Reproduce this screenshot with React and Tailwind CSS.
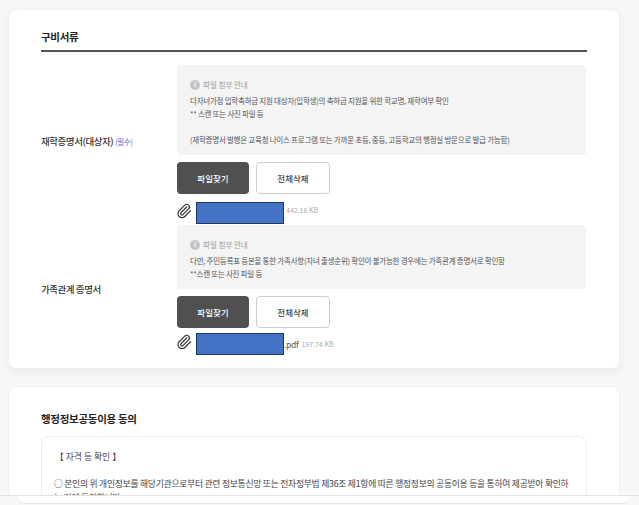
import { Paperclip } from 'lucide-react'

const font = { fontFamily: '"Noto Sans CJK KR", "Noto Sans", sans-serif' }

function Notice({ lines, className }) {
  return (
    <div className={`rounded-[4px] bg-[#f4f4f4] pl-[13px] pt-[13px] ${className}`}>
      <div className="flex h-[13px] items-center gap-[3px] text-[7.5px] text-[#9a9a9a]">
        <span className="flex h-[10px] w-[10px] items-center justify-center rounded-full bg-[#c4c4c4] text-[7px] font-bold leading-none text-[#f4f4f4]">i</span>
        파일 첨부 안내
      </div>
      <div className="mt-[3px] text-[7.5px] leading-[13px] tracking-[-0.25px] text-[#555]">
        {lines.map((line, i) => (
          <p key={i} className="h-[13px] whitespace-nowrap">{line}</p>
        ))}
      </div>
    </div>
  )
}

function Buttons() {
  return (
    <div className="mt-[7px] flex gap-[7px]">
      <button className="h-[32px] w-[72px] rounded-[4px] bg-[#505050] text-[8.5px] font-medium text-white">파일찾기</button>
      <button className="h-[32px] w-[74px] rounded-[4px] border border-[#ccc] bg-white text-[8.5px] font-medium text-[#444]">전체삭제</button>
    </div>
  )
}

function FileRow({ ext, size, className, sizeClass }) {
  return (
    <div className={`flex h-[22px] items-center ${className}`}>
      <Paperclip size={16} strokeWidth={1.9} className="-mt-[5px] -ml-[1px] shrink-0 text-[#3a3a3a]" />
      <span className="ml-[4px] h-[22px] w-[88px] border border-[#1f3864] bg-[#4472c4]" />
      {ext && <span className="text-[8.5px] tracking-[-0.3px] text-[#555]">{ext}</span>}
      <span className={`text-[7px] text-[#aaa] ${ext ? 'ml-[3px]' : 'ml-[2px]'} ${sizeClass}`}>{size}</span>
    </div>
  )
}

function DocRow({ label, required, labelClass, children }) {
  return (
    <div className="flex items-center">
      <div className={`w-[136px] shrink-0 text-[9.5px] font-medium tracking-[-0.45px] text-[#333] ${labelClass}`}>
        {label}
        {required && <span className="ml-[2px] text-[7.5px] font-normal text-[#5b6fd6]">(필수)</span>}
      </div>
      <div className="w-[409px]">{children}</div>
    </div>
  )
}

export default function App() {
  return (
    <div style={font} className="relative h-[505px] w-[639px] overflow-hidden bg-[#f7f7f7]">
      <div className="ml-2 w-[612px] pt-[9px]">
        <section className="h-[360px] rounded-[8px] border border-[#f0f0f0] bg-white px-[32px] pt-[18px] shadow-[0_3px_8px_rgba(0,0,0,0.06)]">
          <h2 className="h-[24px] border-b-2 border-[#555] pb-[4px] text-[10.5px] font-bold leading-[17px] tracking-[-0.3px] text-[#222]">구비서류</h2>
          <div className="mt-[13px]">
            <DocRow label="재학증명서(대상자)" required labelClass="pb-[6px]">
              <Notice
                className="h-[90px]"
                lines={[
                  '다자녀가정 입학축하금 지원 대상자(입학생)의 축하금 지원을 위한 학교명, 재학여부 확인',
                  '** 스캔 또는 사진 파일 등',
                  '',
                  '(재학증명서 발행은 교육청 나이스 프로그램 또는 가까운 초등, 중등, 고등학교의 행정실 방문으로 발급 가능함)',
                ]}
              />
              <Buttons />
              <FileRow size="442.16 KB" className="mt-[8px]" sizeClass="-mt-[6px]" />
            </DocRow>
            <div className="mt-[1px]">
              <DocRow label="가족관계 증명서" labelClass="pb-[2px]">
                <Notice
                  className="h-[64px]"
                  lines={[
                    '다만, 주민등록표 등본을 통한 가족사항(자녀 출생순위) 확인이 불가능한 경우에는 가족관계 증명서로 확인함',
                    '**스캔 또는 사진 파일 등',
                  ]}
                />
                <Buttons />
                <FileRow ext=".pdf" size="197.74 KB" className="mt-[5px]" />
              </DocRow>
            </div>
          </div>
        </section>

        <section className="mt-[17px] h-[200px] rounded-[8px] border border-[#f0f0f0] bg-white px-[32px] pt-[24px]">
          <h2 className="text-[10.5px] font-bold leading-[16px] tracking-[-0.3px] text-[#222]">행정정보공동이용 동의</h2>
          <div className="mt-[9px] h-[120px] rounded-[8px] border border-[#eee] pl-[12px] pt-[13px] text-[8.8px] leading-[14px] tracking-[-0.25px] text-[#444]">
            <p className="ml-[1px] h-[14px] tracking-[0px]">【 자격 등 확인 】</p>
            <p className="mt-[13px] w-[520px]">○ 본인의 위 개인정보를 해당기관으로부터 관련 정보통신망 또는 전자정부법 제36조 제1항에 따른 행정정보의 공동이용 등을 통하여 제공받아 확인하<br />는 것에 동의합니다</p>
          </div>
        </section>
      </div>

      {/* bottom edge of the capture, sits over the page */}
      <div className="absolute bottom-0 left-0 right-0 h-[10px] border-t border-[#e2e2e2] bg-[#f7f7f7]">
        <div className="ml-[18px] mr-[10px] h-[8px] rounded-b-[6px] border-b border-[#e6e6e6] bg-white" />
      </div>
    </div>
  )
}
